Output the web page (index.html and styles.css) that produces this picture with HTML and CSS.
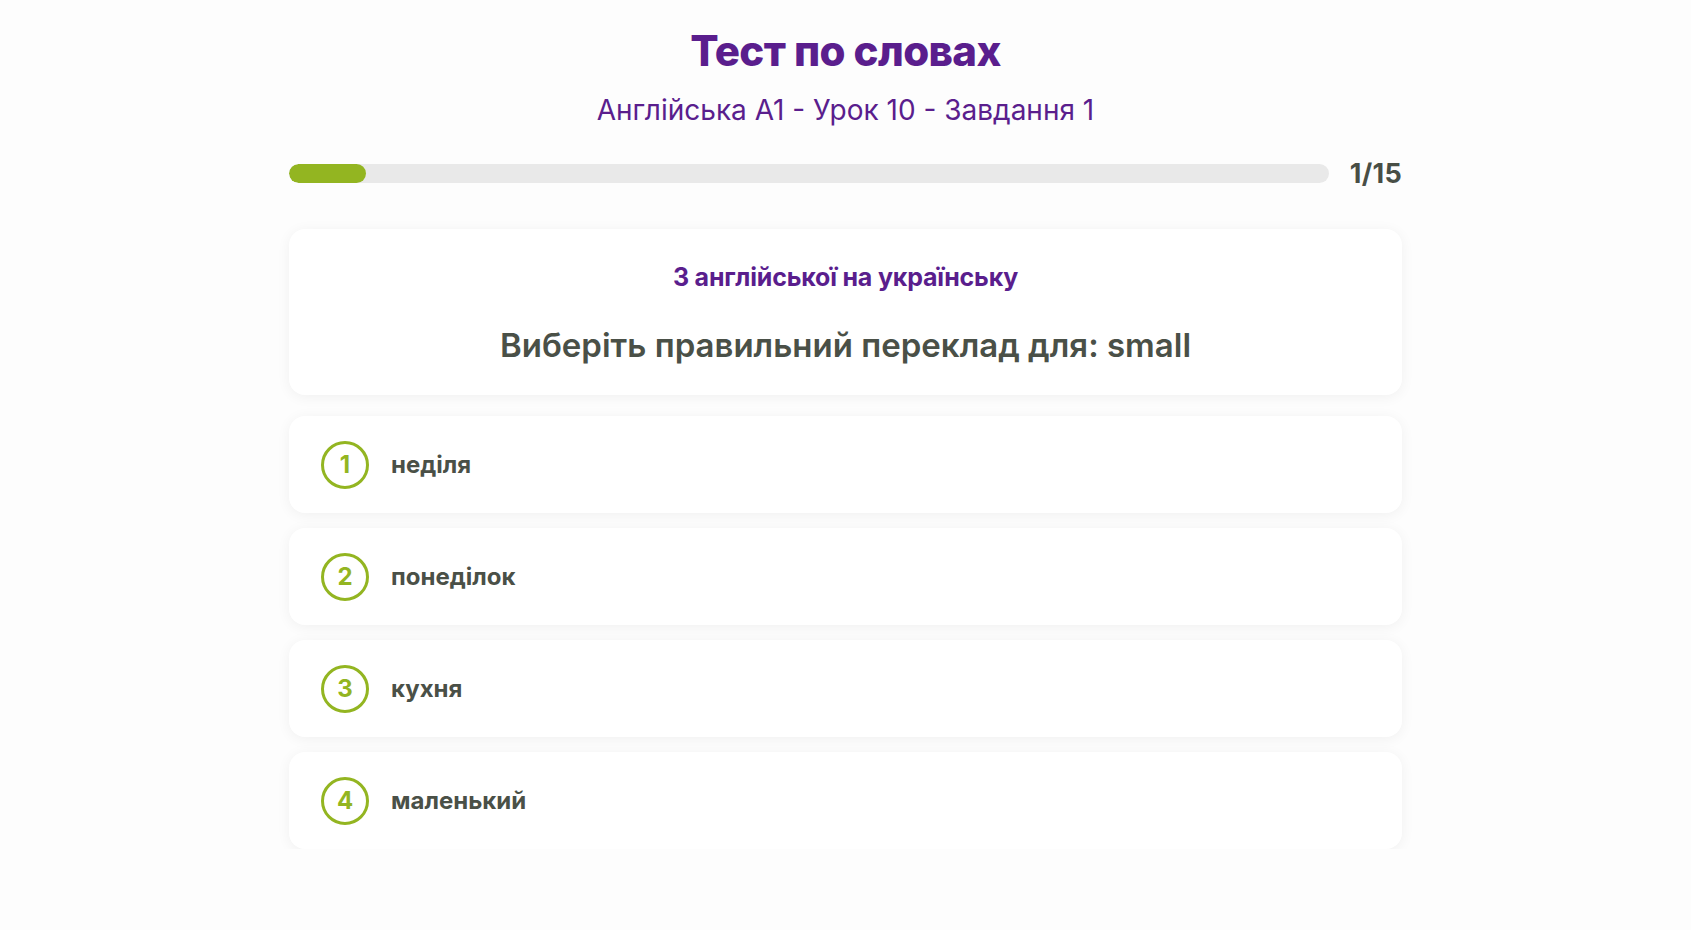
FILE: index.html
```html
<!DOCTYPE html>
<html lang="uk">
<head>
<meta charset="utf-8">
<title>Тест по словах</title>
<link rel="stylesheet" href="styles.css">
</head>
<body>
<main class="quiz">
  <header class="quiz-head">
    <h1 class="quiz-title">Тест по словах</h1>
    <p class="quiz-sub">Англійська A1 - Урок 10 - Завдання 1</p>
  </header>

  <div class="progress">
    <div class="progress-track"><div class="progress-fill" style="width: 7.4%"></div></div>
    <span class="progress-count">1/15</span>
  </div>

  <section class="card question">
    <p class="question-kind">З англійської на українську</p>
    <p class="question-text">Виберіть правильний переклад для: small</p>
  </section>

  <ul class="options">
    <li class="card option"><span class="option-num">1</span><span class="option-label">неділя</span></li>
    <li class="card option"><span class="option-num">2</span><span class="option-label">понеділок</span></li>
    <li class="card option"><span class="option-num">3</span><span class="option-label">кухня</span></li>
    <li class="card option"><span class="option-num">4</span><span class="option-label">маленький</span></li>
  </ul>
</main>
</body>
</html>
```

FILE: styles.css
```css
* { box-sizing: border-box; }

html, body {
  margin: 0;
  padding: 0;
  background: #fdfdfd;
}

body {
  font-family: "Inter", "Lato", "Noto Sans", "Liberation Sans", sans-serif;
  color: #4a5047;
}

.quiz {
  width: 1113px;
  margin: 0 auto;
  padding-top: 24px;
}

.quiz-head {
  text-align: center;
}

.quiz-title {
  margin: 0;
  font-size: 42px;
  line-height: 54px;
  font-weight: 800;
  letter-spacing: -0.6px;
  color: #5a1e8d;
}

.quiz-sub {
  margin: 10px 0 0;
  font-size: 28px;
  line-height: 44px;
  font-weight: 400;
  color: #5a1e8d;
}

.progress {
  display: flex;
  align-items: center;
  gap: 21px;
  margin-top: 21px;
  height: 40px;
}

.progress-track {
  flex: 1;
  height: 19px;
  border-radius: 10px;
  background: #e9e9e9;
  overflow: hidden;
}

.progress-fill {
  height: 100%;
  border-radius: 10px;
  background: #93b521;
}

.progress-count {
  font-size: 27px;
  font-weight: 700;
  letter-spacing: 0.3px;
  color: #484e45;
}

.card {
  background: #ffffff;
  border-radius: 16px;
  box-shadow: 0 2px 14px rgba(0, 0, 0, 0.055);
}

.question {
  margin-top: 36px;
  height: 166px;
  padding-top: 32px;
  text-align: center;
}

.question-kind {
  margin: 0;
  font-size: 25px;
  line-height: 32px;
  font-weight: 700;
  letter-spacing: -0.2px;
  color: #5a1e8d;
}

.question-text {
  margin: 34px 0 0;
  font-size: 33px;
  line-height: 36px;
  font-weight: 600;
  color: #4a5047;
}

.options {
  list-style: none;
  margin: 21px 0 0;
  padding: 0;
  display: flex;
  flex-direction: column;
  gap: 15px;
}

.option {
  display: flex;
  align-items: center;
  gap: 22px;
  height: 97px;
  padding-left: 32px;
}

.option-num {
  display: flex;
  align-items: center;
  justify-content: center;
  width: 48px;
  height: 48px;
  border: 3px solid #93b521;
  border-radius: 50%;
  font-size: 24px;
  font-weight: 700;
  color: #93b521;
}

.option-label {
  font-size: 24px;
  font-weight: 700;
  color: #4a5047;
}
```
